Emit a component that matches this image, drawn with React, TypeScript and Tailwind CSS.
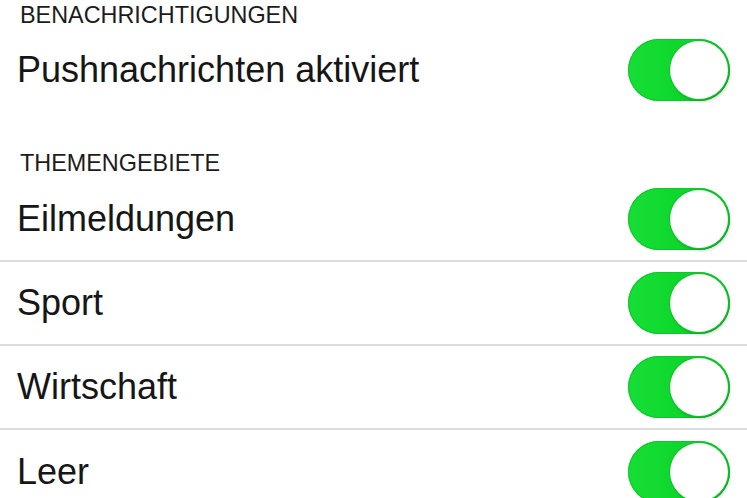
import React from "react";

const font = { fontFamily: '"Liberation Sans", Arial, sans-serif' };

const Toggle: React.FC = () => (
  <div className="relative h-[62px] w-[102px] shrink-0 rounded-full bg-gradient-to-r from-[#16de36] to-[#02d01f] shadow-[inset_0_0_0_1px_#0fc72a]">
    <div className="absolute right-[2px] top-[2px] h-[58px] w-[58px] rounded-full bg-white shadow-[0_0_0_1px_#17bf2f,2px_3px_3px_rgba(0,0,0,0.18)]" />
  </div>
);

const Row: React.FC<{ label: string; border?: boolean }> = ({ label, border }) => (
  <div
    className={`flex h-[84px] items-center justify-between pl-[17px] pr-[17px] ${
      border ? "border-b-2 border-[#dcdcdc]" : ""
    }`}
  >
    <span className="text-[36px] leading-none text-[#161616]">{label}</span>
    <Toggle />
  </div>
);

const Header: React.FC<{ title: string; className?: string }> = ({ title, className }) => (
  <div className={`pl-5 text-[23.4px] leading-[26px] text-[#1c1c1c] ${className ?? ""}`}>{title}</div>
);

export default function App() {
  return (
    <div className="h-[498px] w-[747px] overflow-hidden bg-white" style={font}>
      <Header title="BENACHRICHTIGUNGEN" className="pt-[2px]" />
      <Row label="Pushnachrichten aktiviert" />
      <Header title="THEMENGEBIETE" className="mt-[38px] mb-[2px]" />
      <Row label="Eilmeldungen" border />
      <Row label="Sport" border />
      <Row label="Wirtschaft" border />
      <Row label="Leer" />
    </div>
  );
}
